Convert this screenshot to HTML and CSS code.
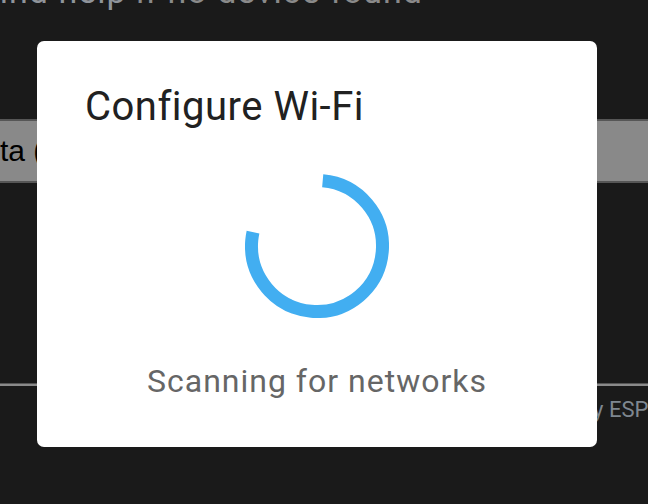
FILE: index.html
```html
<!DOCTYPE html>
<html lang="en">
<head>
    <meta charset="UTF-8">
    <meta name="viewport" content="width=device-width, initial-scale=1.0">
    <title>Configure Wi-Fi</title>
    <link rel="stylesheet" href="styles.css">
</head>
<body>
    <div class="page">
        <p class="hint"><span class="hint-link">find help</span> if no device found</p>
        <div class="port-select">ta (COM3)</div>
        <div class="rule"></div>
        <p class="footer">Installer powered by ESP Web Tools</p>
    </div>

    <div class="dialog" role="dialog" aria-label="Configure Wi-Fi">
        <h2 class="dialog-title">Configure Wi-Fi</h2>
        <div class="spinner">
            <svg width="144" height="144" viewBox="0 0 144 144">
                <circle cx="72" cy="72" r="65.5" fill="none" stroke="#42aef1" stroke-width="13"
                        stroke-dasharray="316.6 411.5" transform="rotate(-85 72 72)"/>
            </svg>
        </div>
        <p class="dialog-text">Scanning for networks</p>
    </div>
</body>
</html>
```

FILE: styles.css
```css
body {
    margin: 0;
    padding: 0;
    background-color: #1a1a1a;
    font-family: Roboto, "Noto Sans", sans-serif;
    overflow: hidden;
    height: 504px;
}

.page {
    width: 648px;
    overflow: hidden;
}

.hint {
    margin: -25px 0 0 -13px;
    font-size: 34px;
    line-height: 32px;
    letter-spacing: 1px;
    color: #8a8a8a;
    white-space: nowrap;
}

.hint-link {
    color: #8f949a;
}

.port-select {
    margin-top: 112px;
    height: 60px;
    border-top: 2px solid #565656;
    border-bottom: 2px solid #565656;
    background-color: #898989;
    color: #000;
    font-family: "Liberation Sans", Arial, sans-serif;
    font-size: 30px;
    line-height: 60px;
    white-space: nowrap;
}

.rule {
    margin-top: 200px;
    height: 1px;
    border-bottom: 2px solid #8a8a8a;
    background-color: #555;
}

.footer {
    margin: 11px 0 0 0;
    padding-left: 407px;
    font-size: 22px;
    line-height: 26px;
    color: #7f8790;
    white-space: nowrap;
}

/* dialog sits over the page */
.dialog {
    position: fixed;
    left: 37px;
    top: 41px;
    width: 560px;
    height: 406px;
    box-sizing: border-box;
    background-color: #fff;
    border-radius: 7px;
    display: flex;
    flex-direction: column;
    align-items: center;
}

.dialog-title {
    align-self: stretch;
    margin: 0;
    padding: 42px 48px 0;
    font-size: 40px;
    line-height: 48px;
    font-weight: 400;
    letter-spacing: 0.5px;
    color: #212121;
}

.spinner {
    margin-top: 43px;
    width: 144px;
    height: 144px;
}

.spinner svg {
    display: block;
}

.dialog-text {
    margin: 43px 0 0 0;
    font-size: 32px;
    line-height: 40px;
    letter-spacing: 1px;
    color: #666;
}
```
